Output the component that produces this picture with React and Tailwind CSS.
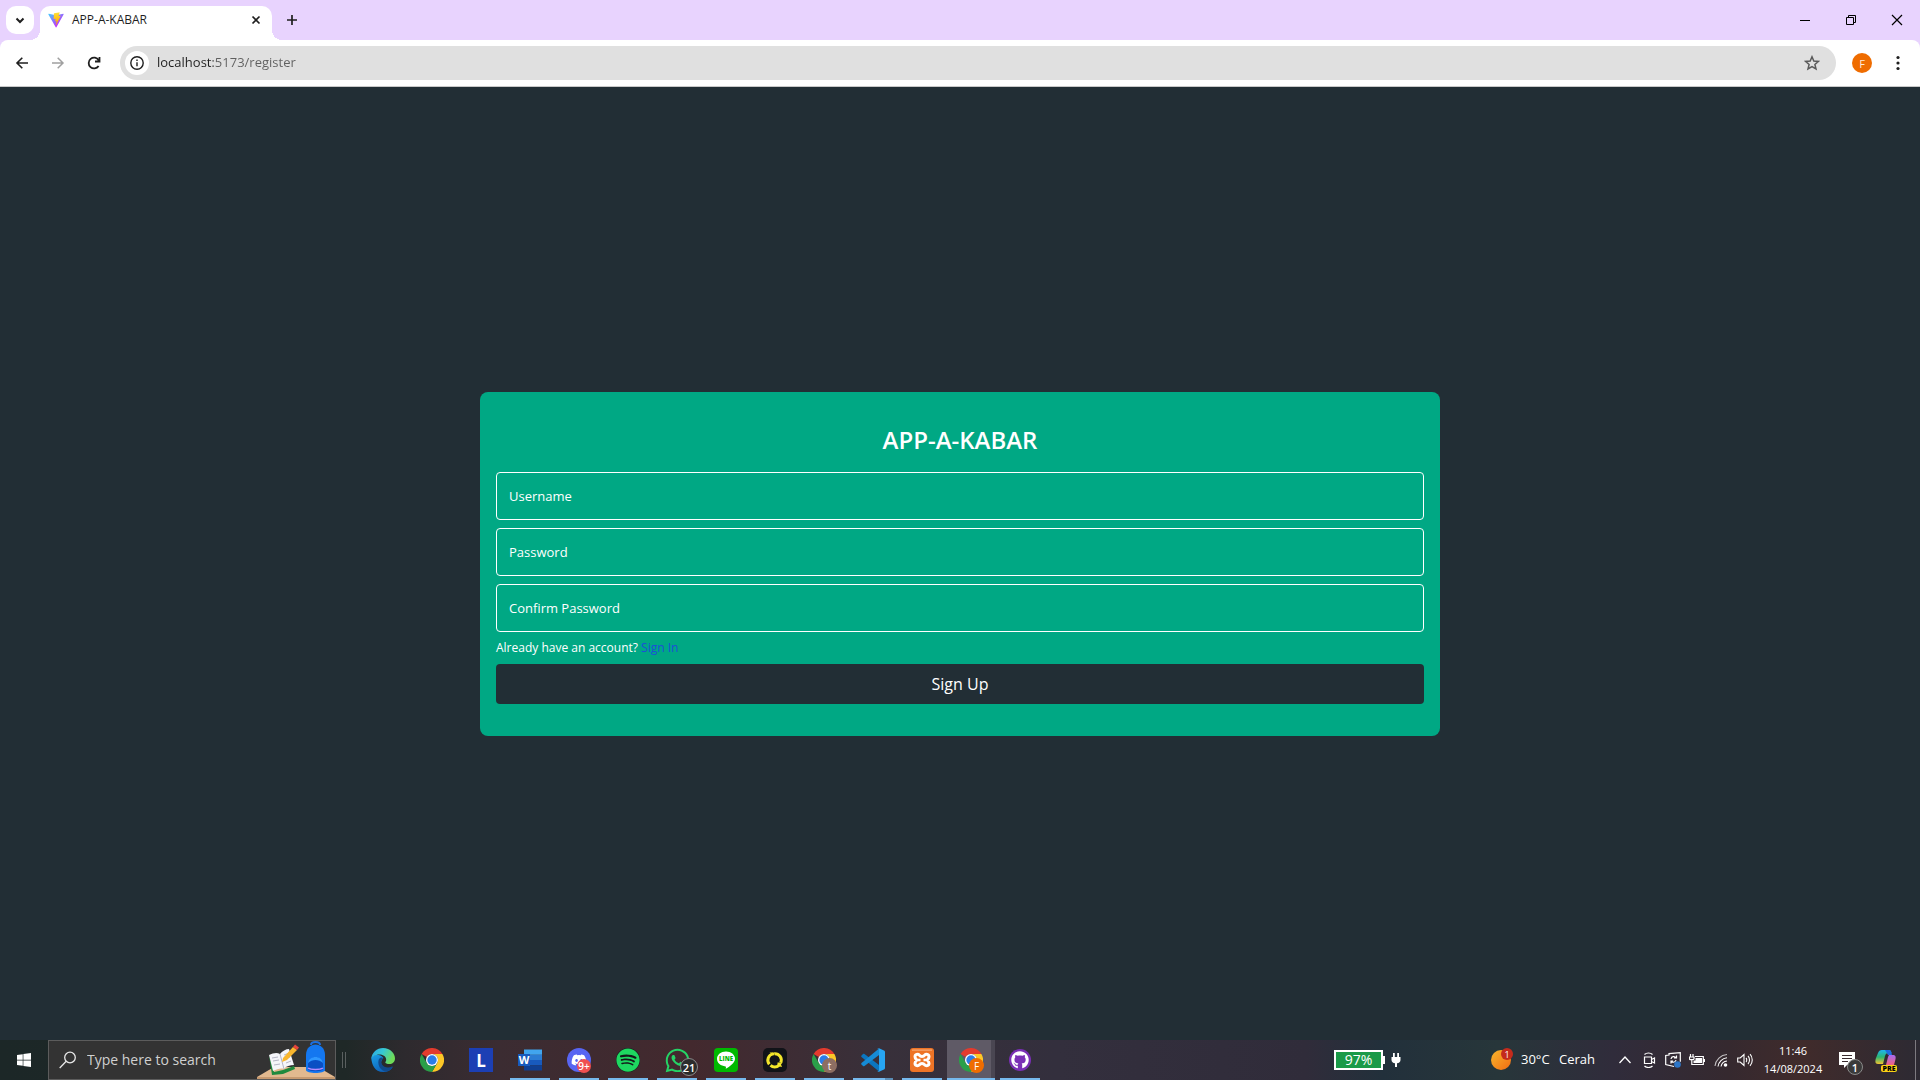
import React from "react";
import { FaWindows, FaDiscord, FaSpotify, FaWhatsapp, FaGithub } from "react-icons/fa";

function ViteLogo() {
  return (
    <svg viewBox="0 0 410 404" className="size-4" aria-hidden="true">
      <defs>
        <linearGradient id="viteBase" x1="6" y1="33" x2="235" y2="344" gradientUnits="userSpaceOnUse">
          <stop stopColor="#41D1FF" />
          <stop offset="1" stopColor="#BD34FE" />
        </linearGradient>
        <linearGradient id="viteBolt" x1="194.65" y1="8.8" x2="236" y2="293" gradientUnits="userSpaceOnUse">
          <stop stopColor="#FFEA83" />
          <stop offset=".083" stopColor="#FFDD35" />
          <stop offset="1" stopColor="#FFA800" />
        </linearGradient>
      </defs>
      <path fill="url(#viteBase)" d="M399.641 59.5246L215.643 388.545C211.844 395.338 202.084 395.378 198.228 388.618L10.5817 59.5563C6.38087 52.1896 12.6802 43.2665 21.0281 44.7586L205.223 77.6824C206.398 77.8924 207.601 77.8904 208.776 77.6763L389.119 44.8058C397.439 43.2894 403.768 52.1434 399.641 59.5246Z" />
      <path fill="url(#viteBolt)" d="M292.965 1.5744L156.801 28.2552C154.563 28.6937 152.906 30.5903 152.771 32.8664L144.395 174.33C144.198 177.662 147.258 180.248 150.51 179.498L188.42 170.749C191.967 169.931 195.172 173.055 194.443 176.622L183.18 231.775C182.422 235.487 185.907 238.661 189.532 237.56L212.947 230.446C216.577 229.344 220.065 232.527 219.297 236.242L201.398 322.875C200.278 328.294 207.486 331.249 210.492 326.603L212.5 323.5L323.454 102.072C325.312 98.3645 322.108 94.137 318.036 94.9228L279.014 102.454C275.347 103.161 272.227 99.746 273.262 96.1583L298.731 7.86689C299.767 4.27314 296.636 0.855181 292.965 1.5744Z" />
    </svg>
  );
}

function Line({ d, size = "size-4", box = "0 0 16 16", width = 2 }) {
  return (
    <svg viewBox={box} className={size} fill="none" stroke="currentColor" strokeWidth={width} aria-hidden="true">
      <path d={d} />
    </svg>
  );
}

function TabStrip() {
  return (
    <header className="flex h-10 items-end bg-[#e8d3fe] pl-1.5">
      <button aria-label="Search tabs" className="mb-1.5 grid size-7 place-items-center rounded-[10px] bg-white text-[#1f1f1f]">
        <Line d="M4.500 6.500 8 10l3.500-3.500" />
      </button>
      <div className="relative ml-1.5 flex h-[34px] w-[232px] items-center rounded-t-[10px] bg-white pr-2 pb-1.5 pl-2">
        <span className="absolute bottom-0 -left-2.5 size-2.5 bg-[radial-gradient(circle_at_0_0,transparent_10px,white_10px)]" />
        <span className="absolute -right-2.5 bottom-0 size-2.5 bg-[radial-gradient(circle_at_100%_0,transparent_10px,white_10px)]" />
        <ViteLogo />
        <span className="ml-2 flex-1 text-xs text-[#1f1f1f]">APP-A-KABAR</span>
        <button aria-label="Close tab" className="grid size-4 place-items-center text-[#1f1f1f]">
          <Line d="m4.500 4.500 7 7m0-7-7 7" width={1.7} />
        </button>
      </div>
      <button aria-label="New tab" className="mb-1.5 ml-1.5 grid size-7 place-items-center text-[#1f1f1f]">
        <Line d="M8 3v10M3 8h10" width={1.7} />
      </button>
      <div className="ml-auto flex h-10 text-black">
        <button aria-label="Minimize" className="grid w-[46px] place-items-center">
          <Line d="M3 8.500h10" width={1} />
        </button>
        <button aria-label="Restore" className="grid w-[46px] place-items-center">
          <Line d="M3.500 5.500h7v7h-7zM5.500 5.500v-2h7v7h-2" width={1} />
        </button>
        <button aria-label="Close" className="grid w-[46px] place-items-center">
          <Line d="m3 3 10 10M13 3 3 13" width={1.2} />
        </button>
      </div>
    </header>
  );
}

function Toolbar() {
  return (
    <div className="bg-[#e8d3fe]">
      <div className="flex h-[47px] items-center rounded-t-lg border-b border-[#c9c9c9] bg-white pr-1 pl-1 text-[#1f1f1f]">
        <button aria-label="Back" className="grid h-9 w-9 place-items-center">
          <Line d="M14 8H3M8.300 2.700 3 8l5.300 5.300" width={1.6} />
        </button>
        <button aria-label="Forward" className="grid h-9 w-9 place-items-center text-[#a0a0a0]">
          <Line d="M2 8h11M7.700 2.700 13 8l-5.300 5.300" width={1.5} />
        </button>
        <button aria-label="Reload" className="grid h-9 w-9 place-items-center">
          <Line d="M12.600 11A5.400 5.400 0 1 1 12.700 5.200M13.500 2v4.500H9" width={1.8} />
        </button>
        <div className="ml-2 flex h-[34px] flex-1 items-center rounded-full bg-[#e0e0e0] pr-4 pl-[5px]">
          <button aria-label="View site information" className="grid size-6 place-items-center rounded-full bg-white">
            <svg viewBox="0 0 16 16" className="size-4" fill="none" stroke="currentColor" strokeWidth="1.400" aria-hidden="true">
              <circle cx="8" cy="8" r="6.200" />
              <path d="M8 7.200v4M8 4.500v1.500" />
            </svg>
          </button>
          <input
            aria-label="Address and search bar"
            defaultValue="localhost:5173/register"
            className="ml-2 flex-1 bg-[linear-gradient(to_right,#1f1f1f_56px,#5f5f5f_56px)] bg-clip-text text-[13px] text-transparent outline-none"
          />
          <button aria-label="Bookmark this tab" className="text-[#5a5a5a]">
            <Line d="m8 1.800 1.800 4.200 4.600.4-3.500 3 1.100 4.500L8 11.500l-4 2.400 1.100-4.500-3.500-3L6.200 6z" width={1.5} />
          </button>
        </div>
        <button aria-label="Profile" className="ml-4 grid size-5 place-items-center rounded-full bg-[#ef6c00] text-[11px] leading-none text-[#ffe9d6]">F</button>
        <button aria-label="Menu" className="ml-2 grid h-9 w-9 place-items-center">
          <svg viewBox="0 0 16 16" className="size-4" fill="currentColor" aria-hidden="true">
            <circle cx="8" cy="2.500" r="1.600" />
            <circle cx="8" cy="8" r="1.600" />
            <circle cx="8" cy="13.500" r="1.600" />
          </svg>
        </button>
      </div>
    </div>
  );
}

const field = "h-12 w-full rounded-sm border border-white bg-transparent px-3 text-[13px] text-white outline-none placeholder:text-white";

function RegisterForm() {
  return (
    <main className="grid flex-1 place-items-center bg-[#222e35]">
      <form className="flex w-1/2 flex-col gap-2 rounded-lg bg-[#00a884] px-4 py-8 text-white" onSubmit={(e) => e.preventDefault()}>
        <h1 className="mb-2 text-center text-2xl leading-8 font-semibold">APP-A-KABAR</h1>
        <input className={field} aria-label="Username" placeholder="Username" />
        <input className={field} type="password" aria-label="Password" placeholder="Password" />
        <input className={field} type="password" aria-label="Confirm Password" placeholder="Confirm Password" />
        <p className="text-xs">
          Already have an account? <a href="#signin" className="text-[#1d4ed8]">Sign In</a>
        </p>
        <button className="h-10 rounded-sm bg-[#222e35] text-base">Sign Up</button>
      </form>
    </main>
  );
}

function EdgeIcon() {
  return (
    <svg viewBox="0 0 24 24" className="size-6" aria-hidden="true">
      <defs>
        <linearGradient id="edgeTop" x1="0" y1="0" x2="1" y2=".4">
          <stop stopColor="#2aa6e8" />
          <stop offset=".5" stopColor="#36c7d4" />
          <stop offset="1" stopColor="#6fdc58" />
        </linearGradient>
        <linearGradient id="edgeSide" x1="0" y1="0" x2=".6" y2="1">
          <stop stopColor="#1ba0e6" />
          <stop offset="1" stopColor="#0d5fb8" />
        </linearGradient>
      </defs>
      <path fill="url(#edgeSide)" d="M.3 10.500C1 16 3 24 12.500 24c3.500 0 7-1.500 9-4.500-3 1.500-8.500 1.300-10.500-2-2.500-4 1-7 1.500-7.500C9 5 1 6 .3 10.500z" />
      <path fill="#114a8b" d="M7.500 12.500c-1 5 2.500 11 8 11 2.600-.6 4.800-2 6.200-4.300.4-.6-.2-.9-.7-.6-3 1.500-8.200 1.200-10-2-1.500-2.600-.5-5 1.300-6.500-2.500-1.500-4.300.2-4.800 2.400z" />
      <path fill="url(#edgeTop)" d="M.2 11C.8 4.500 6 0 12 0c7.500 0 12 5.500 12 10.500 0 3.500-2.500 5.500-5.700 5.500-2.300 0-4-.7-4-1.500 0-.6.9-1 .9-2.800C15.200 9 12.500 6.500 8.500 6.500 4 6.500 1 8.700.2 11z" />
    </svg>
  );
}

function ChromeIcon() {
  return (
    <svg viewBox="0 0 24 24" className="size-6" aria-hidden="true">
      <path fill="#e33b2e" d="M1.600 6A12 12 0 0 1 22.400 6H12a6 6 0 0 0-5.200 3z" />
      <path fill="#fdc727" d="M22.400 6A12 12 0 0 1 12 24l5.200-9A6 6 0 0 0 12 6z" />
      <path fill="#2a9f49" d="M1.600 6A12 12 0 0 0 12 24l5.200-9a6 6 0 0 1-10.400 0z" />
      <circle cx="12" cy="12" r="6" fill="#fff" />
      <circle cx="12" cy="12" r="4.700" fill="#2b7de9" />
    </svg>
  );
}

function WordIcon() {
  return (
    <div className="relative size-6">
      <svg viewBox="0 0 24 24" className="size-6" aria-hidden="true">
        <path fill="#41a5ee" d="M6 1.500h18v5.300H6z" />
        <path fill="#2b7cd3" d="M6 6.800h18V12H6z" />
        <path fill="#185abd" d="M6 12h18v5.300H6z" />
        <path fill="#103f91" d="M6 17.300h18v5.200H6z" />
        <path fill="#185abd" d="M0 6h12v12H0z" />
      </svg>
      <span className="absolute top-1.5 left-0 w-3 text-center text-[11px] leading-3 font-bold text-white">W</span>
    </div>
  );
}

function LineIcon() {
  return (
    <div className="relative size-6">
      <svg viewBox="0 0 24 24" className="size-6" aria-hidden="true">
        <rect width="24" height="24" rx="4" fill="#00b900" />
        <path fill="#fff" d="M12 3.500c5 0 9 3.200 9 7.300 0 4-5.500 8.200-9.300 10 .3-1.300.5-2.200-.2-2.400C6.800 18 3 15 3 10.800 3 6.700 7 3.500 12 3.500z" />
      </svg>
      <span className="absolute top-1.5 left-0 w-6 text-center text-[6px] leading-[10px] font-extrabold text-[#00b900]">LINE</span>
    </div>
  );
}

function MusicIcon() {
  return (
    <svg viewBox="0 0 24 24" className="size-6" aria-hidden="true">
      <rect width="24" height="24" rx="5" fill="#111318" />
      <path fill="none" stroke="#f3e52b" strokeWidth="3" d="M6.300 16.300A6.500 6.500 0 0 1 10 5.900M11.500 5.700a6.400 6.400 0 0 1 6.200 9M7.500 17.300a6.500 6.500 0 0 0 8.500 0" />
      <path fill="#f3e52b" d="M6.500 4.500h5.500l-1 3-2-1zM14.500 14.500l5 0-1.500 2 1 2.500-4.500-1z" />
    </svg>
  );
}

function VscodeIcon() {
  return (
    <svg viewBox="0 0 24 24" className="size-6" aria-hidden="true">
      <path fill="#0b76c0" d="M.5 7.500 2 6c.5-.4 1-.3 1.500 0L18 17v6.500L.5 9c-.5-.5-.5-1 0-1.500z" />
      <path fill="#168bd6" d="M.5 16.500 2 18c.5.4 1 .3 1.500 0L18 7V.5L.5 15c-.5.500-.5 1 0 1.500z" />
      <path fill="#27a5f2" d="m17.500 0 5.500 2.500c.600.300 1 .800 1 1.500v16c0 .700-.400 1.200-1 1.500L17.500 24c-.700.200-1.200 0-1.500-.500.900.500 2 0 2-1V1.500c0-1-1.100-1.500-2-1 .3-.5.800-.7 1.500-.5z" />
    </svg>
  );
}

function XamppIcon() {
  return (
    <svg viewBox="0 0 24 24" className="size-6" aria-hidden="true">
      <rect width="24" height="24" rx="3" fill="#ee7426" />
      <path fill="#f6ab78" d="M2 1.500h20v1.200H2z" />
      <path
        fill="none"
        stroke="#fff"
        strokeWidth="3"
        strokeLinejoin="round"
        d="M9.500 7.200c1 1.600 4 1.600 5 0C16 5.700 19 6 19 8.700c0 1.500-.7 2.300-1.700 3.300 1 1 1.700 1.800 1.700 3.300 0 2.700-3 3-4.500 1.500-1-1.600-4-1.600-5 0C8 18.300 5 18 5 15.300c0-1.500.7-2.300 1.700-3.300C5.700 11 5 10.200 5 8.700 5 6 8 5.700 9.500 7.200z"
      />
      <path stroke="#fff" strokeWidth="2.500" d="M7 12h3.500M13.500 12H17" />
    </svg>
  );
}

function Badge({ className, children }) {
  return <span className={"absolute grid place-items-center rounded-full leading-none text-white " + className}>{children}</span>;
}

const apps = [
  { name: "Edge", icon: <EdgeIcon /> },
  { name: "Chrome", icon: <ChromeIcon /> },
  {
    name: "L",
    icon: <span className="grid size-6 place-items-center bg-[#1c3fb4] text-[17px] leading-none font-bold text-white">L</span>,
  },
  { name: "Word", open: true, icon: <WordIcon /> },
  {
    name: "Discord",
    open: true,
    icon: (
      <>
        <span className="grid size-6 place-items-center rounded-full bg-[#5865f2]">
          <FaDiscord className="size-4 text-white" aria-hidden="true" />
        </span>
        <Badge className="top-[19px] left-[22px] size-[14px] bg-[#f04f50] text-[10px] font-semibold">9+</Badge>
      </>
    ),
  },
  {
    name: "Spotify",
    open: true,
    icon: (
      <span className="grid size-6 place-items-center rounded-full bg-[#14181a]">
        <FaSpotify className="size-6 text-[#1ed760]" aria-hidden="true" />
      </span>
    ),
  },
  {
    name: "WhatsApp",
    open: true,
    icon: (
      <>
        <FaWhatsapp className="size-[27px] text-[#25d366]" aria-hidden="true" />
        <Badge className="top-[18px] left-[27px] size-[18px] border border-[#8a8a8a] bg-[#2c2c2c] text-[11px] font-semibold">21</Badge>
      </>
    ),
  },
  { name: "LINE", open: true, icon: <LineIcon /> },
  { name: "Music", open: true, icon: <MusicIcon /> },
  {
    name: "Chrome profile t",
    open: true,
    icon: (
      <>
        <ChromeIcon />
        <Badge className="top-[18px] left-[22px] size-[15px] bg-[#8d6e63] text-[10px]">t</Badge>
      </>
    ),
  },
  { name: "Visual Studio Code", open: true, stacked: true, icon: <VscodeIcon /> },
  { name: "XAMPP", open: true, icon: <XamppIcon /> },
  {
    name: "Chrome profile F",
    active: true,
    icon: (
      <>
        <ChromeIcon />
        <Badge className="top-[18px] left-[22px] size-[15px] bg-[#ef6c00] text-[10px]">F</Badge>
      </>
    ),
  },
  {
    name: "GitHub Desktop",
    open: true,
    icon: (
      <span className="grid size-[22px] place-items-center rounded-full bg-[#7a2fb5]">
        <FaGithub className="size-[18px] text-white" aria-hidden="true" />
      </span>
    ),
  },
];

function AppButton({ app }) {
  return (
    <button
      aria-label={app.name}
      className={"relative grid h-10 w-12 place-items-center " + (app.active ? "bg-[linear-gradient(to_right,#5f5a66_44px,#4a4652_44px)]" : "")}
    >
      {app.icon}
      {app.open && <span className="absolute bottom-0 left-1 h-0.5 w-10 bg-[#76b9ed]" />}
      {app.stacked && <span className="absolute right-1 bottom-0 h-0.5 w-2 bg-[#5a8db5]" />}
      {app.active && <span className="absolute bottom-0 left-0 h-0.5 w-12 bg-[#76b9ed]" />}
    </button>
  );
}

function SearchArt() {
  return (
    <svg viewBox="0 0 78 38" className="h-[38px] w-[78px]" aria-hidden="true">
      <path fill="#e2b98f" d="M17 26h44l17 10H0z" />
      <path fill="#c79a70" d="M0 36h78v2H0z" />
      <path fill="#1f8a3d" d="m12 14 3 20 11-1 12-5-1-3-11 4-9 2z" />
      <path fill="#f5f5fa" d="M12 14c4-2 8-3 11-1 2-3 6-5 9-5l5 16c-4 0-8 1-10 4-3-1-7 0-11 2z" />
      <path stroke="#b5b5c5" strokeWidth="1" fill="none" d="m15 17 6-1M16 20l6-1M17 24l6-1M27 14l5-2M28 18l5-2M29 22l5-2M23 13l4 15" />
      <path fill="#f9b62e" d="m26 17 10-11 4 3-10 10-5 2z" />
      <path fill="#e8453c" d="m36 6 2-2.500 4 3-2 2.500z" />
      <path fill="none" stroke="#1b6fe0" strokeWidth="2" d="M54 4c0-4 9-4 9 0" />
      <path fill="#1477f0" d="M49 14c0-14 19-14 19 0v15c0 4-19 4-19 0z" />
      <path fill="#0a4fc4" d="M51 23c0-9 15-9 15 0v5c0 3-15 3-15 0z" />
      <path fill="#2d97ff" d="M51 22c1-8 14-8 15 0-4-4-11-4-15 0z" />
      <path fill="none" stroke="#b78cff" strokeWidth="1.500" d="M51 27c3 2 12 2 15 0" />
    </svg>
  );
}

function Tray() {
  return (
    <div className="ml-auto flex h-10 items-center text-white">
      <div className="mr-[90px] flex items-center" aria-label="Battery 97%, charging">
        <span className="grid h-5 w-[49px] place-items-center border-2 border-white bg-[#1a9a48] text-sm leading-none">97%</span>
        <span className="h-2 w-0.5 bg-white" />
        <svg viewBox="0 0 10 16" className="ml-1.5 h-4 w-2.5" fill="currentColor" aria-hidden="true">
          <path d="M2 1h1.800v4h2.400V1H8v4h1.500v3c0 2-1.500 3-3.500 3.300V15H4v-3.700C2 11 .5 10 .5 8V5H2z" />
        </svg>
      </div>
      <button className="flex h-10 items-center text-[13px]">
        <span className="relative mr-2.5 size-5 rounded-full bg-gradient-to-br from-[#f8b62c] to-[#f06a12]">
          <Badge className="-top-0.5 left-2.5 size-3 bg-[#c42b1c] text-[9px]">1</Badge>
        </span>
        <span className="w-[38px] text-left">30°C</span>
        <span className="w-[37px] text-left">Cerah</span>
      </button>
      <div className="ml-[17px] flex items-center">
        <button aria-label="Show hidden icons" className="grid w-6 place-items-center">
          <Line d="m2.500 11 5.500-6 5.500 6" width={1.3} />
        </button>
        <button aria-label="Meet Now" className="grid w-6 place-items-center">
          <Line d="M3.500 5h7v6.500h-7zM10.500 7.500l3-1.500v5l-3-1.500M3.500 2.500c2-2 6-2 8 0M3.500 14c2 2 6 2 8 0" width={1.2} />
        </button>
        <button aria-label="Sync" className="grid w-6 place-items-center">
          <svg viewBox="0 0 16 16" className="size-4" fill="none" stroke="currentColor" strokeWidth="1.200" aria-hidden="true">
            <path d="M9 14.500.7 12.500v-9L4 3V1.600L15.300.7v9M6 7c.5-3 4-3 5-1M11.500 3.500V6H9M11 8c-.5 2.500-4 3-5 1M6 11.500V9h2" />
            <circle cx="12.500" cy="12.500" r="3.300" fill="#2d76c8" stroke="none" />
          </svg>
        </button>
        <button aria-label="Power" className="grid w-6 place-items-center">
          <svg viewBox="0 0 16 16" className="size-4" fill="none" stroke="currentColor" strokeWidth="1.200" aria-hidden="true">
            <path d="M1.500 2v3M4 2v3M.5 5h4.500v2c0 1-4.500 1-4.500 0zM2.800 8v4.500h11.500v-8H6M15.500 7v3" />
            <path d="M4.500 8.500h2V6h6.500v5H4.500z" fill="currentColor" stroke="none" />
          </svg>
        </button>
        <button aria-label="Network" className="grid w-6 place-items-center">
          <svg viewBox="0 0 16 16" className="size-4" fill="none" stroke="currentColor" strokeWidth="1.100" aria-hidden="true">
            <path opacity=".7" d="M2 14A13 13 0 0 1 14 2.500" />
            <path d="M5 14.500a10 10 0 0 1 9-8.700M8 14.500A7 7 0 0 1 14 9" />
            <circle cx="12.500" cy="13" r="1.800" fill="currentColor" stroke="none" />
          </svg>
        </button>
        <button aria-label="Volume" className="grid w-6 place-items-center">
          <Line d="M.7 6v4h2.500L7 13.500v-11L3.200 6zM9 6c1 1 1 3 0 4M11 4c2 2 2 6 0 8M13 2.200c3 3 3 8.500 0 11.600" width={1.1} />
        </button>
      </div>
      <button className="ml-0.5 flex w-[68px] flex-col items-center text-[11px] leading-[18px]">
        <span>11:46</span>
        <span>14/08/2024</span>
      </button>
      <button aria-label="Notifications" className="relative ml-3 grid h-10 w-6 place-items-start pt-3">
        <svg viewBox="0 0 16 16" className="size-4" aria-hidden="true">
          <path fill="#fff" d="M0 0h16v13H8l-3 3v-3H0z" />
          <path stroke="#3a2b2f" strokeWidth="1.200" d="M3 3.500h10M3 6.500h10M3 9.500h6" />
        </svg>
        <Badge className="top-[19px] left-2 size-4 border border-[#8a8a8a] bg-[#3a3a3a] text-[11px] font-semibold">1</Badge>
      </button>
      <button aria-label="Copilot" className="relative ml-3 size-[22px]">
        <svg viewBox="0 0 22 22" className="size-[22px]" aria-hidden="true">
          <defs>
            <linearGradient id="copBlue" x1="0" y1="0" x2="0" y2="1">
              <stop stopColor="#1fb6f0" />
              <stop offset=".5" stopColor="#2bb673" />
              <stop offset="1" stopColor="#f2c230" />
            </linearGradient>
            <linearGradient id="copPink" x1="0" y1="0" x2="0" y2="1">
              <stop stopColor="#a56bf0" />
              <stop offset="1" stopColor="#f0627f" />
            </linearGradient>
          </defs>
          <path fill="url(#copBlue)" d="M7 1h7c1.500 0 2 1 2.500 3h-3c-2 0-3 1-3.500 3L8 15H3c-3 0-3-3-2-6l2-5c.8-2 2-3 4-3z" />
          <path fill="#1f6de0" d="M10 1h4c1.500 0 2 1 2.500 3L17 6h-4z" />
          <path fill="url(#copPink)" d="M14 6h4c3 0 3 2.500 2.300 5L19 16h-8l2-8z" />
        </svg>
        <span className="absolute right-0 -bottom-px w-4 rounded-xs bg-[#fbd116] text-center text-[7px] leading-[7px] font-extrabold text-black">PRE</span>
      </button>
      <span className="ml-[18px] h-10 w-px bg-[#7d7a80]" />
      <span className="w-1" />
    </div>
  );
}

function Taskbar() {
  return (
    <footer className="flex h-10 items-center bg-[linear-gradient(to_right,#1c2727_0%,#1f2827_18%,#2d2a2e_21%,#3b2c32_26%,#43292e_36%,#38303a_46%,#332f3d_55%,#302c3a_68%,#22303b_72%,#27363a_78%,#302c3b_84%,#35292f_90%,#402b2b_94%,#2d2a33_100%)]">
      <button aria-label="Start" className="grid h-10 w-12 place-items-center text-white">
        <FaWindows className="size-4" aria-hidden="true" />
      </button>
      <label className="flex h-10 w-72 items-center border border-[#5c5c5c] bg-[#333333] pl-2.5 text-[#e8e8e8]">
        <svg viewBox="0 0 18 18" className="size-[18px] shrink-0" fill="none" stroke="currentColor" strokeWidth="1.300" aria-hidden="true">
          <circle cx="11" cy="6.500" r="5.300" />
          <path d="m7.200 10.300-6.500 6.700" />
        </svg>
        <input aria-label="Search" placeholder="Type here to search" className="ml-2.5 w-0 flex-1 bg-transparent text-sm outline-none placeholder:text-[#d0d0d0]" />
        <SearchArt />
      </label>
      <span className="ml-1.5 h-4 w-1 border-x border-[#5a5f5f]" />
      <nav className="ml-[13px] flex gap-px" aria-label="Taskbar">
        {apps.map((app) => (
          <AppButton key={app.name} app={app} />
        ))}
      </nav>
      <Tray />
    </footer>
  );
}

export default function App() {
  return (
    <div className="flex min-h-screen flex-col font-['Open_Sans','Noto_Sans',sans-serif]">
      <TabStrip />
      <Toolbar />
      <RegisterForm />
      <Taskbar />
    </div>
  );
}
